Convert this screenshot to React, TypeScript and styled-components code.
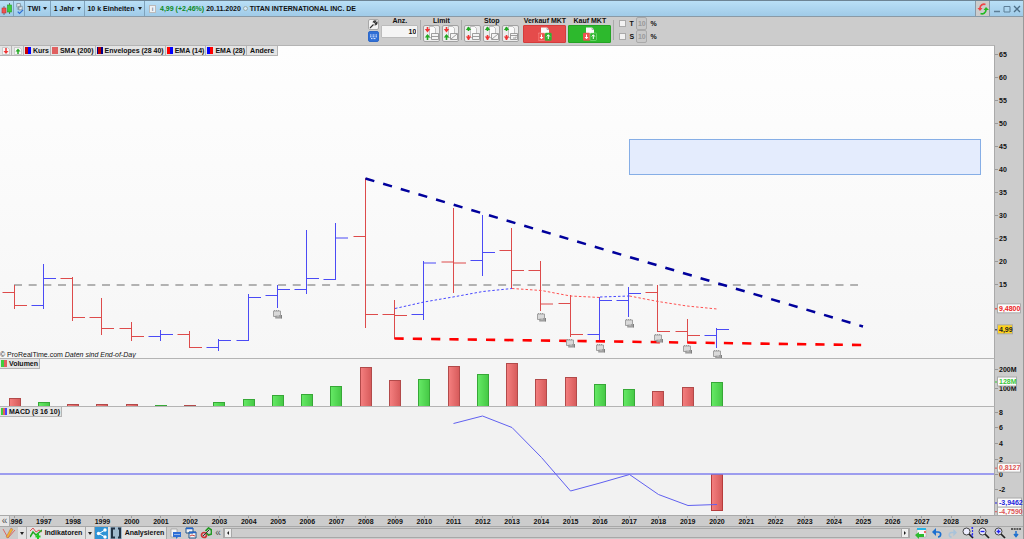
import React from 'react';
import styled, { createGlobalStyle, css } from 'styled-components';

const GlobalStyle = createGlobalStyle`
  * { box-sizing: border-box; }
  html, body { margin: 0; height: 100%; }
  body { background: #ccc; font: bold 7px/8px "Liberation Sans", Arial, sans-serif; color: #111; }
  #root { height: 100%; }
  button, input { font: inherit; color: inherit; }
`;

const RED = '#dd4b4b';
const BLUE = '#4b4bf5';

/* ---------- shared parts ---------- */

const Window = styled.main`
  display: flex;
  flex-direction: column;
  min-height: 100vh;
  overflow: hidden;
  border-right: 1px solid #999;
`;

const Plain = styled.button`
  display: inline-flex;
  align-items: center;
  justify-content: center;
  gap: 3px;
  padding: 0;
  border: 0;
  background: none;
  white-space: nowrap;
`;

const Icon = styled.svg<{ $w: number; $h?: number }>`
  display: block;
  flex: none;
  width: ${(p) => p.$w}px;
  height: ${(p) => p.$h ?? p.$w}px;
`;

const Caret = styled.span`
  border: 2px solid transparent;
  border-top: 3px solid #222;
  border-bottom: 0;
`;

/* ---------- title bar ---------- */

const TitleBar = styled.header`
  display: flex;
  flex: none;
  height: 17px;
  border-top: 1px solid #6d8494;
  border-bottom: 1px solid #8a9aa6;
  background: linear-gradient(#b9dff6, #a0cbe8);
`;

const TitleButton = styled(Plain)<{ $w: number }>`
  width: ${(p) => p.$w}px;
  border-right: 1px solid #7fa3bc;
`;

const Quote = styled.h1`
  display: flex;
  flex: 1;
  align-items: center;
  gap: 2px;
  margin: 0;
  padding-left: 4px;
  font: inherit;
  white-space: nowrap;
`;

const Change = styled.span`
  color: #0b8a1c;
`;

const InfoBadge = styled.span`
  width: 7px;
  height: 8px;
  margin-right: 2px;
  border: 1px solid #bbb;
  background: #eef2f5;
  color: #789;
  font-size: 6px;
  line-height: 6px;
  text-align: center;
`;

const Dot = styled.span`
  width: 5px;
  height: 5px;
  border: 1px solid #9aa;
  border-radius: 50%;
  background: #d8eaf6;
`;

const SyncButton = styled(Plain)`
  width: 15px;
  border: solid #8a9aa6;
  border-width: 0 1px;
  background: #ccc;
`;

const WindowControls = styled.div`
  display: flex;
  align-items: center;
  justify-content: center;
  gap: 2px;
  width: 33px;
`;

/* ---------- order toolbar ---------- */

const OrderBar = styled.section`
  display: flex;
  flex: none;
  justify-content: center;
  gap: 2px;
  height: 28px;
  padding: 0 0 2px 2px;
`;

const Stack = styled.div<{ $gap?: number }>`
  display: flex;
  flex-direction: column;
  justify-content: center;
  gap: ${(p) => p.$gap ?? 0}px;
`;

const SmallTool = styled(Plain)<{ $blue?: boolean }>`
  width: 11px;
  height: 11px;
  border: 1px solid ${(p) => (p.$blue ? '#2d68c8' : '#a8a8a8')};
  border-radius: 2px;
  background: ${(p) => (p.$blue ? '#2f6fd6' : '#f3f3f3')};
`;

const Group = styled.div<{ $inset?: number; $divided?: boolean }>`
  display: flex;
  flex-direction: column;
  align-items: center;
  padding-left: ${(p) => p.$inset ?? 0}px;
  ${(p) =>
    p.$divided &&
    css`
      background: linear-gradient(#aaa, #aaa) left center / 1px 20px no-repeat;
    `}
`;

const GroupRow = styled.div`
  display: flex;
  gap: 2px;
`;

const Quantity = styled.input`
  width: 37px;
  height: 13px;
  padding: 0 1px;
  border: 1px solid #bbb;
  border-radius: 1px;
  background: #f4f4f4;
  text-align: right;
`;

const OrderTool = styled(Plain)`
  width: 17px;
  height: 17px;
  border: 1px solid #a2a2a2;
  border-radius: 2px;
  background: #ededed;
`;

const MarketButton = styled(Plain)<{ $tone: 'sell' | 'buy' }>`
  width: 43px;
  height: 18px;
  border: 1px solid ${(p) => (p.$tone === 'sell' ? '#d43c3c' : '#24a324')};
  border-radius: 1px;
  background: ${(p) => (p.$tone === 'sell' ? '#e54b4b' : '#2db92d')};
`;

const Protection = styled.div`
  display: flex;
  align-items: center;
  gap: 3px;
  height: 13px;

  label { width: 4px; }
`;

const Check = styled.input`
  appearance: none;
  width: 7px;
  height: 7px;
  margin: 0;
  border: 1px solid #aaa;
  background: #f2f2f2;
`;

const Percent = styled.input`
  width: 11px;
  height: 13px;
  padding: 0;
  border: 1px solid #aaa;
  border-radius: 2px;
  background: #c8c8c8;
  color: #9a9a9a;
  text-align: center;
`;

/* ---------- chart panes ---------- */

const Pane = styled.section<{ $share: number }>`
  position: relative;
  display: flex;
  flex: ${(p) => p.$share} 1 0;
  min-height: 0;
`;

const Plot = styled.svg`
  flex: 1;
  display: block;
  min-width: 0;
  width: 0;
  height: 100%;
  border-top: 1px solid #b4b4b4;
  border-right: 1px solid #aaa;
  overflow: hidden;
`;

const Axis = styled.svg`
  flex: none;
  display: block;
  width: 28px;
  height: 100%;
`;

const Legend = styled.div`
  position: absolute;
  top: 0;
  left: 0;
  display: flex;
  height: 11px;
  border: 1px solid #b4b4b4;
  border-left: 0;
  background: #e4e4e4;
`;

const LegendItem = styled(Plain)`
  gap: 2px;
  padding: 0 1px;
  border-right: 1px solid #b4b4b4;
  &:last-child { border-right: 0; }
`;

const LegendTool = styled(LegendItem)`
  width: 12px;
`;

const LegendMore = styled(LegendItem)`
  padding: 0 3px;
`;

const Swatch = styled.span<{ $colors: string }>`
  width: 6px;
  height: 7px;
  background: linear-gradient(90deg, ${(p) => p.$colors});
`;

const Copyright = styled.p`
  position: absolute;
  bottom: 0;
  left: 0;
  margin: 0;
  font-weight: normal;
  line-height: 6px;
`;

/* ---------- time axis and bottom bar ---------- */

const TimeAxis = styled.div`
  position: relative;
  flex: none;
  height: 12px;
  padding-right: 28px;
  border-top: 1px solid #aaa;
  border-bottom: 1px solid #a8a8a8;
`;

const Years = styled.ol`
  display: grid;
  grid-template-columns: repeat(34, 1fr);
  margin: 0;
  padding: 0;
  list-style: none;
`;

const Year = styled.li`
  display: flex;
  justify-content: center;
  padding-top: 2px;
  background: linear-gradient(#999, #999) top center / 1px 2px no-repeat;
`;

const ScrollBack = styled(Plain)`
  position: absolute;
  top: 0;
  left: 0;
  width: 10px;
  height: 10px;
  border-right: 1px solid #aaa;
  background: #e6e6e6;
  color: #555;
  font-weight: normal;
  font-size: 10px;
`;

const BottomBar = styled.footer`
  display: flex;
  flex: none;
  align-items: center;
  height: 12px;
`;

const BarButton = styled(Plain)<{ $w: number; $tone?: 'light' | 'blue' }>`
  flex: none;
  width: ${(p) => p.$w}px;
  height: 12px;
  ${(p) => p.$tone === 'light' && 'background: #e2e2e2; border-right: 1px solid #aaa;'}
  ${(p) => p.$tone === 'blue' && 'background: #2f93d6;'}
`;

const CollapseButton = styled(BarButton)`
  color: #555;
  font-weight: normal;
  font-size: 10px;
`;

const Scrollbar = styled.div`
  display: flex;
  flex: 1;
  height: 10px;
  margin-right: 4px;
  border: 1px solid #a8a8a8;
  background: #cdcdcd;
  justify-content: space-between;
`;

const ScrollArrow = styled(Plain)`
  width: 8px;
  background: #eee;
  border: solid #a8a8a8;
  border-width: 0 1px;
`;

/* ---------- data ---------- */

const FIRST_YEAR = 1996;
const xOf = (year: number) => Math.round((year - FIRST_YEAR + 0.5) * 29.26) - 0.5;

type Bar = [high: number, low: number, open: number, close: number, up: 0 | 1, volume: number];

/* One entry per year from 1996: price levels, direction, top of the volume column */
const bars: Bar[] = [
  [285, 309, 292.5, 305.5, 0, 398],
  [264, 309, 305.5, 278.5, 1, 402],
  [277, 321, 278.5, 317.5, 0, 404],
  [298, 335, 317.5, 328.5, 0, 404],
  [322, 341, 328.5, 336.5, 0, 404],
  [330, 341, 336.5, 334.5, 1, 405],
  [331, 348, 334.5, 347.5, 0, 405],
  [339, 351, 347.5, 340.5, 1, 402],
  [294, 341, 340.5, 297.5, 1, 399],
  [285, 308, 295.5, 289.5, 1, 395],
  [230, 294, 289.5, 278.5, 1, 394],
  [223, 280, 279.5, 238, 1, 386],
  [178, 328, 236.5, 314.5, 0, 367],
  [300, 339, 314.5, 315.5, 0, 380],
  [261, 320, 314.5, 263, 1, 379],
  [208, 293, 262, 263, 0, 366],
  [215, 276, 260.5, 252.5, 1, 374],
  [228, 288, 250.5, 270.5, 0, 363],
  [261, 311, 270.5, 304, 0, 379],
  [295, 337, 303.5, 334.5, 0, 377],
  [297, 341, 334.5, 300.5, 1, 384],
  [287, 317, 300.5, 293.5, 1, 389],
  [285, 332, 292.5, 331.5, 0, 391],
  [319, 343, 331.5, 335.5, 0, 387],
  [328, 348, 335.5, 329.5, 1, 382],
];

const rollovers: [number, number][] = [
  [277, 314], [541, 317], [570, 343], [600, 348], [629, 323], [658, 338], [687, 349], [717, 354],
];

const years = Array.from({ length: 34 }, (_, i) => String(FIRST_YEAR + i));

/* ---------- drawings ---------- */

const SheetIcon = ({ kind }: { kind: number }) => (
  <Icon $w={15} viewBox="0 0 15 15">
    <path d="M5.5 .5h4l2 2v9h-6z" fill="#fafafa" stroke="#aaa" strokeWidth=".7" />
    <path d="M3.5 1v4" stroke={kind > 2 ? '#22a822' : '#e33'} strokeWidth="1.600" />
    <path d={kind > 2 ? 'M.8 4L3.500 .5 6.200 4z' : 'M.8 3l2.700 3.500L6.200 3z'} fill={kind > 2 ? '#22a822' : '#e33'} />
    <path d="M3.500 9v5" stroke={kind > 2 ? '#e33' : '#22a822'} strokeWidth="1.600" />
    <path d={kind > 2 ? 'M.8 10.500L3.500 14l2.700-3.500z' : 'M.8 11.500L3.500 8l2.700 3.500z'} fill={kind > 2 ? '#e33' : '#22a822'} />
    <path d="M7.500 7.500h7v6h-7z" fill="#f4f4f4" stroke="#888" strokeWidth=".8" />
    <path d={kind % 3 === 0 ? 'M7.500 10.500h7' : kind === 4 ? 'M7.500 9.500h7M10 12h3v-1.500' : 'M8 13l6-5'} stroke="#888" strokeWidth=".8" fill="none" />
  </Icon>
);

const MarketIcon = ({ sell }: { sell?: boolean }) => (
  <Icon $w={14} viewBox="0 0 14 14">
    <path d="M3 .5h6l2 2V8H3z" fill="#fafafa" />
    <path d="M9 .5v2h2" fill="none" stroke="#999" strokeWidth=".7" />
    <rect y="6" width="7" height="7.500" rx="1" fill="#ef5350" stroke={sell ? '#f7a0a0' : '#c55'} strokeWidth=".5" />
    <rect x="7" y="6" width="6.500" height="7.500" rx="1" fill="#2fb52f" stroke={sell ? '#4a4' : '#9e9'} strokeWidth=".5" />
    <path d="M3.500 7.500v4M2 10l1.500 1.800L5 10M10.300 12V8M8.800 9.500l1.500-1.800 1.500 1.800" stroke="#fff" fill="none" />
  </Icon>
);

const Candles = () => (
  <Icon $w={12} viewBox="0 0 12 12">
    <path d="M3 3v9M8.500 0v11" stroke="#555" strokeWidth=".8" />
    <rect x="1" y="5" width="4" height="5" fill="#ef5350" stroke="#b33" strokeWidth=".6" />
    <rect x="6.500" y="2" width="4" height="7" fill="#3ecf3e" stroke="#292" strokeWidth=".6" />
  </Icon>
);

const ChainCheck = () => (
  <Icon $w={9} $h={13} viewBox="0 0 10 13">
    <path d="M2 1h4v4H2zM4 4h4v4H4zM2 7h3" fill="#e4eaee" stroke="#7b8c98" strokeWidth=".9" />
    <path d="M3 10l2 2L9 8" fill="none" stroke="#2f6fd6" strokeWidth="1.400" />
  </Icon>
);

const Sync = () => (
  <Icon $w={12} viewBox="0 0 12 12">
    <path d="M8.500 1.500A4 4 0 0 0 3 5" fill="none" stroke="#e44" strokeWidth="1.700" />
    <path d="M.5 5h5L3 8z" fill="#e44" />
    <path d="M3.500 10.500A4 4 0 0 0 9 7" fill="none" stroke="#2b2" strokeWidth="1.700" />
    <path d="M6.500 7H12L9 4z" fill="#2b2" />
  </Icon>
);

const PageArrow = ({ color, up }: { color: string; up?: boolean }) => (
  <Icon $w={8} viewBox="0 0 8 8">
    <path d="M.5 .5h5l2 2v5h-7z" fill="#f6f6f6" stroke="#bbb" strokeWidth=".7" />
    <path d={up ? 'M4 7V3' : 'M4 1v4'} stroke={color} strokeWidth="1.500" />
    <path d={up ? 'M1.500 4.500L4 1.500l2.500 3z' : 'M1.500 4L4 7l2.500-3z'} fill={color} />
  </Icon>
);

const Magnifier = ({ kind }: { kind: 'fit' | 'out' | 'in' }) => (
  <Icon $w={12} viewBox="0 0 12 12">
    <circle cx="4.500" cy="4.500" r="3.500" fill="#eef" stroke="#444" />
    <path d="M7 7l4 4" stroke="#222" strokeWidth="1.700" />
    {kind === 'fit' ? (
      <path d="M9 1h3M10.500 0v10M9 8h3" stroke="#33e" strokeWidth="1.200" strokeDasharray="2 1" />
    ) : (
      <path d={kind === 'in' ? 'M2.500 4.500h4M4.500 2.500v4' : 'M2.500 4.500h4'} stroke="#22e" strokeWidth="1.400" />
    )}
  </Icon>
);

const Tag = ({ y, w, text, color, fill = '#fbfbfb' }: { y: string; w: number; text: string; color: string; fill?: string }) => (
  <svg y={y} overflow="visible">
    <path d="M0 0h3" stroke={color} />
    <rect x="2.500" y="-5" width={w} height="9" fill={fill} stroke="#aaa" />
    <text x="4" y="2" fill={color}>{text}</text>
  </svg>
);

const Ticks = ({ items, top, height }: { items: [number, string][]; top: number; height: number }) => (
  <>
    {items.map(([y, label]) => (
      <svg key={label} y={`${((y - top) / height) * 100}%`} overflow="visible">
        <path d="M0 .5h3" stroke="#999" />
        <text x="4" y="3" fill="#111">{label}</text>
      </svg>
    ))}
  </>
);

const priceTicks = Array.from({ length: 11 }, (_, i): [number, string] => [54 + Math.round(i * 22.95), String(65 - i * 5)]);

const Gradients = () => (
  <defs>
    <linearGradient id="up"><stop stopColor="#66ea66" /><stop offset="1" stopColor="#45c845" /></linearGradient>
    <linearGradient id="down"><stop stopColor="#f58080" /><stop offset="1" stopColor="#d65a5a" /></linearGradient>
    <linearGradient id="sheet" x2="0" y2="1"><stop stopColor="#fefefe" /><stop offset="1" stopColor="#f6f6f6" /></linearGradient>
  </defs>
);

const PricePane = () => (
  <Pane $share={313}>
    <Plot viewBox="0 46 994 312" preserveAspectRatio="none" role="img" aria-label="Kurs">
      <Gradients />
      <rect y="46" width="994" height="312" fill="url(#sheet)" />
      <rect x="629.5" y="139.5" width="351" height="35" fill="#e4ecfd" stroke="#86aee6" />
      <path d="M14 285H858" stroke="#9b9b9b" strokeWidth="1.500" strokeDasharray="8 6.670" />
      {bars.map(([high, low, open, close, up], i) => {
        const x = xOf(FIRST_YEAR + i);
        return (
          <path key={i} d={`M${x} ${high}V${low}M${x - 12} ${open}H${x}M${x} ${close}H${x + 12.5}`} stroke={up ? BLUE : RED} />
        );
      })}
      <g fill="none" strokeDasharray="2.500 2">
        <path d="M395 308.500L424 302 453 297 483 291.500 512 288.500M600 297L629.500 296" stroke="#4848ff" />
        <path d="M512 288.500L541.500 290.500 570.500 296 600 297.500M629.500 296L658 301.500 687 306 717 309" stroke="#ff5050" />
      </g>
      <path d="M365.500 178.500L863 326.500" stroke="#00009c" strokeWidth="2.500" strokeDasharray="9.200 9.200" />
      <path d="M394.500 338.500L863 345" stroke="#ff0000" strokeWidth="2.600" strokeDasharray="9.200 9.100" />
      {rollovers.map(([x, y]) => (
        <g key={x} transform={`translate(${x - 4} ${y - 4})`}>
          <path d="M.5 1h7v5.500h-7z" fill="#d9d9d9" stroke="#999" strokeWidth=".9" />
          <path d="M1 .5h6" stroke="#999" strokeDasharray="1 1" />
          <path d="M2.500 5h6.500v3.500H2.500z" fill="#c2c2c2" />
          <path d="M3 6v2.500M5 6.500v2M7 5v3.500M8.500 5v3.500" stroke="#777" strokeWidth=".9" />
        </g>
      ))}
    </Plot>
    <Axis>
      <Ticks items={priceTicks} top={45} height={313} />
      <Tag y="84.300%" w={23} text="9,4800" color="#ee2222" />
      <Tag y="91%" w={15} text="4,99" color="#222" fill="#ffd21c" />
    </Axis>
    <Legend>
      <LegendTool aria-label="Nach unten"><PageArrow color="#e33" /></LegendTool>
      <LegendTool aria-label="Nach oben"><PageArrow color="#2a2" up /></LegendTool>
      <LegendItem><Swatch $colors="#c00 45%, #00f 45%" />Kurs</LegendItem>
      <LegendItem><Swatch $colors="#e06060, #e06060" />SMA (200)</LegendItem>
      <LegendItem><Swatch $colors="#00008b 20%, #b00 20% 60%, #00008b 60%" />Envelopes (28 40)</LegendItem>
      <LegendItem><Swatch $colors="#f00 50%, #00f 50%" />EMA (14)</LegendItem>
      <LegendItem><Swatch $colors="#00f 45%, #f00 45%" />EMA (28)</LegendItem>
      <LegendMore>Andere</LegendMore>
    </Legend>
    <Copyright>© ProRealTime.com <i>Daten sind End-of-Day</i></Copyright>
  </Pane>
);

const VolumePane = () => (
  <Pane $share={48}>
    <Plot viewBox="0 359 994 47" preserveAspectRatio="none" role="img" aria-label="Volumen">
      <rect y="359" width="994" height="47" fill="#f5f5f5" />
      {bars.map(([, , , , up, top], i) => (
        <rect key={i} x={xOf(FIRST_YEAR + i) - 5} y={top + 0.5} width="11" height={407 - top} fill={up ? 'url(#up)' : 'url(#down)'} stroke={up ? '#37a837' : '#b24a4a'} />
      ))}
    </Plot>
    <Axis>
      <Ticks items={[[369, '200M'], [388, '100M']]} top={358} height={48} />
      <Tag y="50%" w={19} text="128M" color="#39c839" />
    </Axis>
    <Legend><LegendItem><Swatch $colors="#3ecf3e 45%, #e06060 45%" />Volumen</LegendItem></Legend>
  </Pane>
);

const MacdPane = () => (
  <Pane $share={109}>
    <Plot viewBox="0 407 994 108" preserveAspectRatio="none" role="img" aria-label="MACD">
      <rect y="407" width="994" height="108" fill="#f2f2f2" />
      <rect x="711.500" y="474.500" width="11" height="36" fill="url(#down)" stroke="#b83c3c" />
      <path d="M0 474H994" stroke="#8080ee" strokeWidth="1.500" />
      <path d="M453.500 423.500L482.500 416 512 427.500 541.500 457.500 570.500 491 600 483 629.500 474.500 658.500 494.500 688 505.500 717 504.500" fill="none" stroke="#6060f0" />
    </Plot>
    <Axis>
      <Ticks items={[[412, '8'], [427, '6'], [443, '4'], [459, '2'], [474, '0'], [489, '-2']]} top={406} height={109} />
      <Tag y="57%" w={23} text="0,8127" color="#dd5555" />
      <Tag y="97%" w={24} text="-4,7590" color="#dd5555" />
      <Tag y="89%" w={24} text="-3,9462" color="#2222dd" />
    </Axis>
    <Legend><LegendItem><Swatch $colors="#3ecf3e 30%, #e06060 30% 65%, #44f 65%" />MACD (3 16 10)</LegendItem></Legend>
  </Pane>
);

/* ---------- page ---------- */

export default function App() {
  return (
    <Window>
      <GlobalStyle />
      <TitleBar>
        <TitleButton $w={14} aria-label="Chart"><Candles /></TitleButton>
        <TitleButton $w={11} aria-label="Verknüpfung"><ChainCheck /></TitleButton>
        <TitleButton $w={26}>TWI<Caret /></TitleButton>
        <TitleButton $w={34}>1 Jahr<Caret /></TitleButton>
        <TitleButton $w={60}>10 k Einheiten<Caret /></TitleButton>
        <Quote>
          <InfoBadge>i</InfoBadge>
          <Change>4,99 (+2,46%)</Change>
          <span>20.11.2020</span>
          <Dot />
          <span>TITAN INTERNATIONAL INC. DE</span>
        </Quote>
        <SyncButton aria-label="Synchronisieren"><Sync /></SyncButton>
        <WindowControls>
          <Plain aria-label="Minimieren"><Icon $w={8} viewBox="0 0 8 8"><path d="M1 6.500h6" stroke="#5d7e96" strokeWidth="1.500" /></Icon></Plain>
          <Plain aria-label="Maximieren"><Icon $w={8} viewBox="0 0 8 8"><path d="M1 1.500h6v5.500h-6z" fill="none" stroke="#5d7e96" /></Icon></Plain>
          <Plain aria-label="Schließen"><Icon $w={8} viewBox="0 0 8 8"><path d="M1 1l6 6M7 1L1 7" stroke="#4d6e86" strokeWidth="1.300" /></Icon></Plain>
        </WindowControls>
      </TitleBar>

      <OrderBar>
        <Stack $gap={1}>
          <SmallTool aria-label="Einstellungen">
            <Icon $w={9} viewBox="0 0 9 9"><path d="M1 8l3.500-3.500M4 2.500C4.500 1 6 .8 6.800 1L5.500 2.500l1 1L8 2.200C8.200 3.500 7.500 5 5.500 5" fill="none" stroke="#333" strokeWidth="1.100" /></Icon>
          </SmallTool>
          <SmallTool $blue aria-label="Tastatur">
            <Icon $w={9} viewBox="0 0 9 9"><path d="M1 3h7M1 4.800h7M2 6.600h5" stroke="#dce8ff" strokeDasharray="1 .5" /></Icon>
          </SmallTool>
        </Stack>
        <Group>
          <label htmlFor="qty">Anz.</label>
          <Quantity id="qty" defaultValue="10" />
        </Group>
        <Group $divided $inset={3}>
          <span>Limit</span>
          <GroupRow>
            <OrderTool aria-label="Limit 1"><SheetIcon kind={0} /></OrderTool>
            <OrderTool aria-label="Limit 2"><SheetIcon kind={1} /></OrderTool>
          </GroupRow>
        </Group>
        <Group $divided $inset={3}>
          <span>Stop</span>
          <GroupRow>
            <OrderTool aria-label="Stop 1"><SheetIcon kind={3} /></OrderTool>
            <OrderTool aria-label="Stop 2"><SheetIcon kind={5} /></OrderTool>
            <OrderTool aria-label="Stop 3"><SheetIcon kind={4} /></OrderTool>
          </GroupRow>
        </Group>
        <Group $inset={2}>
          <span>Verkauf MKT</span>
          <MarketButton $tone="sell" aria-label="Verkauf MKT"><MarketIcon sell /></MarketButton>
        </Group>
        <Group>
          <span>Kauf MKT</span>
          <MarketButton $tone="buy" aria-label="Kauf MKT"><MarketIcon /></MarketButton>
        </Group>
        <Group $divided $inset={6}>
          <Stack>
            {['T', 'S'].map((name) => (
              <Protection key={name}>
                <Check type="checkbox" id={`use-${name}`} />
                <label htmlFor={`use-${name}`}>{name}</label>
                <Percent aria-label={`${name} Prozent`} defaultValue="10" disabled />
                <span>%</span>
              </Protection>
            ))}
          </Stack>
        </Group>
      </OrderBar>

      <PricePane />
      <VolumePane />
      <MacdPane />

      <TimeAxis>
        <Years>{years.map((year) => <Year key={year}>{year}</Year>)}</Years>
        <ScrollBack aria-label="Zurück">«</ScrollBack>
      </TimeAxis>

      <BottomBar>
        <BarButton $w={18} aria-label="Zeichnen">
          <Icon $w={14} $h={12} viewBox="0 0 14 12">
            <path d="M1 2l5 9L13 3" fill="none" stroke="#d66" />
            <path d="M4 10L9 1l2 1.500L6 11z" fill="#f5b52e" stroke="#a66" strokeWidth=".5" />
          </Icon>
        </BarButton>
        <BarButton $w={9} $tone="light" aria-label="Werkzeuge"><Caret /></BarButton>
        <BarButton $w={59} $tone="light">
          <Icon $w={12} viewBox="0 0 12 12">
            <path d="M0 4l3-3 3 4 3-2 3 2" fill="none" stroke="#d55" />
            <path d="M0 10l3-5 3 3 6-5" fill="none" stroke="#2a2" strokeWidth="1.500" />
            <path d="M8 7v5M5.500 9.500h5" stroke="#2c2" strokeWidth="2" />
          </Icon>
          Indikatoren
        </BarButton>
        <BarButton $w={9} $tone="light" aria-label="Indikatorenliste"><Caret /></BarButton>
        <BarButton $w={13} $tone="blue" aria-label="Teilen">
          <Icon $w={11} viewBox="0 0 11 11">
            <path d="M9 2L3 5.500 9 9" fill="none" stroke="#fff" />
            <circle cx="9" cy="2" r="1.700" fill="#fff" /><circle cx="2.500" cy="5.500" r="1.700" fill="#fff" /><circle cx="9" cy="9" r="1.700" fill="#fff" />
          </Icon>
        </BarButton>
        <BarButton $w={59} $tone="light">
          <Icon $w={12} viewBox="0 0 12 12">
            <path d="M0 0h12v12H0z" fill="#9fb9cc" />
            <path d="M5 1.500H2v9h3M8 1.500h2v9H8" fill="none" stroke="#234" strokeWidth="2" />
          </Icon>
          Analysieren
        </BarButton>
        <BarButton $w={16} aria-label="Notizen">
          <Icon $w={11} viewBox="0 0 11 11">
            <path d="M1 1h6v8H1z" fill="#f5f5f5" stroke="#999" strokeWidth=".7" />
            <path d="M3 4h8v5H8l-2 2V9H3z" fill="#2f6fd6" /><path d="M4.500 6.500h5" stroke="#fff" strokeDasharray="1 1" />
          </Icon>
        </BarButton>
        <BarButton $w={15} aria-label="Kopieren">
          <Icon $w={12} viewBox="0 0 12 12">
            <path d="M1 1h7v5H1zM4 5h7v6H4z" fill="#f5f5f5" stroke="#258" />
            <path d="M1 1.500h7M4 5.500h7" stroke="#26c" strokeWidth="1.700" /><path d="M5 9l2-1 3 1" fill="none" stroke="#c44" />
          </Icon>
        </BarButton>
        <BarButton $w={15} aria-label="Trennen">
          <Icon $w={12} viewBox="0 0 12 12">
            <circle cx="4" cy="8" r="2.500" fill="none" stroke="#c33" strokeWidth="1.700" />
            <path d="M5.500 4l3-3 3 2v4l-3 1-2-2" fill="none" stroke="#292" strokeWidth="1.700" /><path d="M3 9l6-6" stroke="#333" />
          </Icon>
        </BarButton>
        <CollapseButton $w={10} aria-label="Einklappen">«</CollapseButton>
        <Scrollbar>
          <ScrollArrow aria-label="Links"><Icon $w={4} viewBox="0 0 4 4"><path d="M3 0v4L1 2z" fill="#222" /></Icon></ScrollArrow>
          <ScrollArrow aria-label="Rechts"><Icon $w={4} viewBox="0 0 4 4"><path d="M1 0v4l2-2z" fill="#222" /></Icon></ScrollArrow>
        </Scrollbar>
        <BarButton $w={13} aria-label="Datum">
          <Icon $w={12} viewBox="0 0 12 12">
            <path d="M2 2h9v8H2z" fill="#f6f6f6" stroke="#aaa" strokeWidth=".6" /><path d="M2 2h9" stroke="#28b4e6" strokeWidth="2" />
            <path d="M0 8l4-3v2h5v3H4v2z" fill="#2dbb2d" /><path d="M9 5h2" stroke="#e66" strokeWidth="2" />
          </Icon>
        </BarButton>
        <BarButton $w={19} aria-label="Rückgängig">
          <Icon $w={10} viewBox="0 0 10 10"><path d="M2 4h4c4 0 3 5 0 5" fill="none" stroke="#1c6fd0" strokeWidth="1.700" /><path d="M0 4l4-4v8z" fill="#1c6fd0" /></Icon>
        </BarButton>
        <BarButton $w={13} aria-label="Wiederholen">
          <Icon $w={9} viewBox="0 0 10 10"><path d="M8 4H4C0 4 1 9 4 9" fill="none" stroke="#a9c3da" strokeWidth="1.700" /><path d="M10 4L6 0v8z" fill="#a9c3da" /></Icon>
        </BarButton>
        <BarButton $w={17} aria-label="Anpassen"><Magnifier kind="fit" /></BarButton>
        <BarButton $w={16} aria-label="Verkleinern"><Magnifier kind="out" /></BarButton>
        <BarButton $w={16} aria-label="Vergrößern"><Magnifier kind="in" /></BarButton>
        <BarButton $w={15} aria-label="Mehr">
          <Icon $w={12} viewBox="0 0 12 12"><path d="M1 2h10" stroke="#333" strokeWidth="1.500" strokeDasharray="2 .7" /><path d="M6 4v5M4 7l2 2.500L8 7" fill="none" stroke="#1c6fd0" strokeWidth="1.500" /></Icon>
        </BarButton>
      </BottomBar>
    </Window>
  );
}
